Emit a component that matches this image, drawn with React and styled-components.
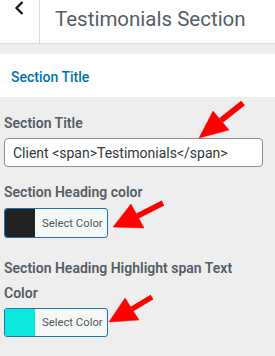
import React from "react";
import styled, { createGlobalStyle } from "styled-components";

const Global = createGlobalStyle`
  html, body { margin: 0; padding: 0; background: #eeeeee; }
  body { font-family: Roboto, "Noto Sans", "Liberation Sans", sans-serif; }
  * { box-sizing: border-box; }
`;

const Page = styled.div`
  position: relative;
  width: 275px;
  height: 356px;
  overflow: hidden;
  background: #eeeeee;
`;

const Header = styled.div`
  display: flex;
  height: 44px;
  background: #fff;
  border-bottom: 1px solid #dddddd;
`;

const BackButton = styled.div`
  width: 40px;
  border-right: 1px solid #dddddd;
  display: flex;
  justify-content: center;
  align-items: flex-start;
  padding-top: 1px;
`;

const HeaderTitle = styled.div`
  padding-left: 15px;
  font-size: 20.5px;
  line-height: 38px;
  color: #555d66;
`;

const SectionBar = styled.div`
  margin-top: 10px;
  height: 43px;
  background: #fff;
  padding-left: 11px;
  display: flex;
  align-items: center;
  font-size: 14px;
  font-weight: 500;
  color: #0073aa;
  padding-top: 2px;
`;

const Content = styled.div`
  padding: 0 12px 0 4px;
`;

const Control = styled.div`
  margin-top: ${(p) => p.$top}px;
`;

const Label = styled.div`
  font-size: 14px;
  font-weight: 600;
  line-height: ${(p) => p.$lh || 24}px;
  color: #555d66;
`;

const TextInput = styled.div`
  margin-top: 3px;
  height: 29px;
  width: 259px;
  border: 1px solid #8c8f94;
  border-radius: 4px;
  background: #fff;
  padding-left: 8px;
  display: flex;
  align-items: center;
  font-size: 14px;
  color: #32373c;
`;

const ColorButton = styled.div`
  margin-top: ${(p) => p.$top}px;
  display: flex;
  width: 104px;
  height: ${(p) => p.$h}px;
  border: 1px solid #2271b1;
  border-radius: 3px;
  overflow: hidden;
  background: #f6f7f7;
`;

const Swatch = styled.div`
  width: 30px;
  background: ${(p) => p.$color};
`;

const ButtonText = styled.div`
  flex: 1;
  display: flex;
  align-items: center;
  padding-left: 7px;
  font-size: 11.3px;
  color: #50575e;
`;

const Overlay = styled.svg`
  position: absolute;
  left: 0;
  top: 0;
  pointer-events: none;
`;

const Arrow = ({ tip, c1, c2, end, w }) => {
  const mid = [(c1[0] + c2[0]) / 2, (c1[1] + c2[1]) / 2];
  return (
    <g fill="#ff0000" stroke="#ff0000">
      <line x1={mid[0]} y1={mid[1]} x2={end[0]} y2={end[1]} strokeWidth={w} />
      <polygon points={`${tip.join(",")} ${c1.join(",")} ${c2.join(",")}`} strokeWidth="0.5" strokeLinejoin="miter" />
    </g>
  );
};

export default function App() {
  return (
    <Page>
      <Global />
      <Header>
        <BackButton>
          <svg width="12" height="16" viewBox="0 0 12 16">
            <polyline points="8.5,1 2.5,7 8.5,13" fill="none" stroke="#111" strokeWidth="2.2" />
          </svg>
        </BackButton>
        <HeaderTitle>Testimonials Section</HeaderTitle>
      </Header>
      <SectionBar>Section Title</SectionBar>
      <Content>
        <Control $top={14}>
          <Label>Section Title</Label>
          <TextInput>Client &lt;span&gt;Testimonials&lt;/span&gt;</TextInput>
        </Control>
        <Control $top={13}>
          <Label>Section Heading color</Label>
          <ColorButton $top={4} $h={30}>
            <Swatch $color="#222222" />
            <ButtonText>Select Color</ButtonText>
          </ColorButton>
        </Control>
        <Control $top={18}>
          <Label $lh={24.5}>Section Heading Highlight span Text Color</Label>
          <ColorButton $top={3} $h={29}>
            <Swatch $color="#0de8df" />
            <ButtonText>Select Color</ButtonText>
          </ColorButton>
        </Control>
      </Content>
      <Overlay width="275" height="356" viewBox="0 0 275 356">
        <Arrow tip={[199, 138]} c1={[213, 111]} c2={[229, 130]} end={[243, 103]} w={6} />
        <Arrow tip={[113, 227]} c1={[131, 204]} c2={[144, 228]} end={[163, 203]} w={5.5} />
        <Arrow tip={[109, 322]} c1={[125, 298]} c2={[139, 320]} end={[152, 297]} w={5.5} />
      </Overlay>
    </Page>
  );
}
